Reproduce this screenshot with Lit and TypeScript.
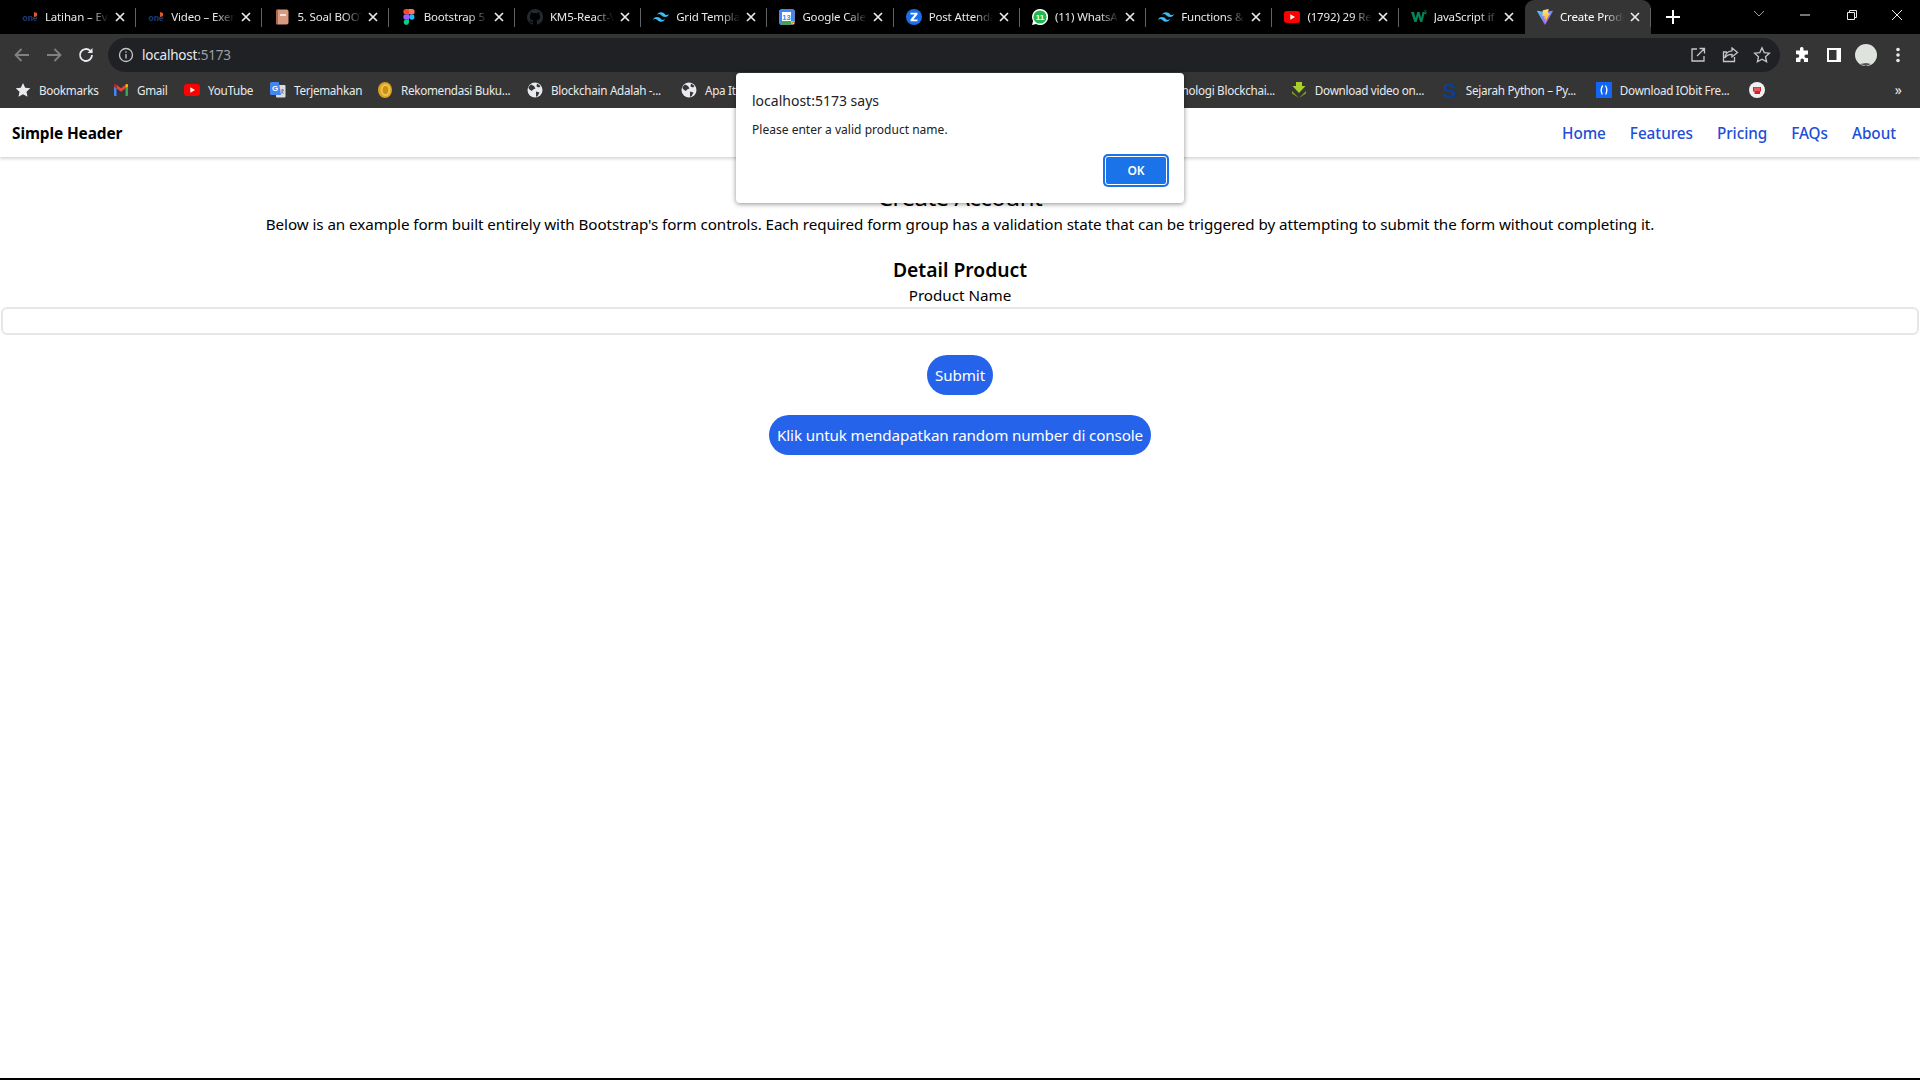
import { LitElement, html, css, svg } from "lit";
import { customElement } from "lit/decorators.js";

const ICONS: Record<string, any> = {
  one: svg`<text x="8" y="11.5" text-anchor="middle" font-family="Liberation Sans" font-size="8.5" font-weight="700" fill="#1f3f77">one</text><path d="M12 3l3 1v3l-3 1z" fill="#e2562c"/>`,
  book: svg`<rect x="2" y="0.5" width="12.5" height="15" rx="2" fill="#d89a80"/><rect x="2" y="0.5" width="2" height="15" rx="1" fill="#a9664e"/><rect x="6" y="5" width="6" height="2" fill="#f6e3da"/>`,
  figma: svg`<path d="M5 0h3v5.300H5a2.650 2.650 0 010-5.300z" fill="#f24e1e"/><path d="M8 0h3a2.650 2.650 0 010 5.300H8z" fill="#ff7262"/><path d="M5 5.300h3v5.300H5a2.650 2.650 0 010-5.300z" fill="#a259ff"/><circle cx="10.800" cy="8" r="2.650" fill="#1abcfe"/><path d="M5 10.600h3v2.700a2.650 2.650 0 11-3-2.700z" fill="#0acf83"/>`,
  github: svg`<path fill="#24292e" d="M8 0a8 8 0 00-2.530 15.590c.4.070.550-.170.550-.380v-1.340c-2.230.480-2.700-1.070-2.700-1.070-.360-.930-.890-1.170-.890-1.170-.730-.500.050-.490.050-.490.800.060 1.230.830 1.230.830.710 1.220 1.870.870 2.330.660.070-.520.280-.870.510-1.070-1.780-.200-3.640-.890-3.640-3.950 0-.870.310-1.590.820-2.150-.080-.200-.360-1.020.080-2.120 0 0 .670-.210 2.200.820a7.600 7.600 0 014 0c1.530-1.040 2.200-.820 2.200-.820.440 1.100.160 1.920.080 2.120.510.560.820 1.270.820 2.150 0 3.070-1.870 3.750-3.650 3.950.290.250.540.730.540 1.480v2.200c0 .210.150.460.550.380A8 8 0 008 0z"/>`,
  tw: svg`<path fill="#38bdf8" d="M8 3.200c-2.100 0-3.500 1.100-4 3.200.8-1.100 1.700-1.500 2.800-1.200.6.200 1 .6 1.500 1.100.8.800 1.700 1.700 3.700 1.700 2.100 0 3.500-1.100 4-3.200-.8 1.100-1.700 1.500-2.800 1.200-.6-.2-1-.6-1.500-1.100C10.900 4.100 10 3.200 8 3.200zM4 8c-2.100 0-3.500 1.100-4 3.200.8-1.100 1.700-1.500 2.800-1.200.6.200 1 .6 1.500 1.100.8.800 1.700 1.700 3.700 1.700 2.100 0 3.500-1.100 4-3.200-.8 1.100-1.700 1.500-2.800 1.200-.6-.2-1-.6-1.500-1.100C6.900 8.900 6 8 4 8z"/>`,
  gcal: svg`<rect x="0.500" y="0.500" width="15" height="15" rx="1.500" fill="#fff"/><path d="M0.500 3V2a1.500 1.500 0 011.500-1.500h10V3z" fill="#4285f4"/><path d="M12 .5h2a1.500 1.500 0 011.500 1.500v10H12z" fill="#4285f4"/><path d="M12 12h3.500v1.500l-3.500 2z" fill="#ea4335"/><path d="M3 12h9v3.500H3z" fill="#34a853"/><path d="M.5 3H3v12.500H2A1.500 1.500 0 01.5 14z" fill="#4285f4"/><path d="M12 12h3.500l-3.500 3.500z" fill="#fbbc04"/><text x="7.500" y="10.500" text-anchor="middle" font-family="Liberation Sans" font-size="7.500" font-weight="700" fill="#4285f4">13</text>`,
  zoom: svg`<circle cx="8" cy="8" r="8" fill="#1a6fe8"/><path d="M4.500 3.800h7v1.800L7.300 10.400h4.200v1.800h-7v-1.800l4.200-4.800H4.500z" fill="#fff"/>`,
  wa: svg`<path d="M8 0a8 8 0 00-6.900 12L0 16l4.100-1.100A8 8 0 108 0z" fill="#fff"/><circle cx="8" cy="8" r="6.600" fill="#1fb84f"/><text x="8" y="11" text-anchor="middle" font-family="Liberation Sans" font-size="8" font-weight="700" fill="#fff">11</text>`,
  yt: svg`<rect x="0" y="2" width="16" height="12" rx="3" fill="#f00"/><path d="M6.300 5.200v5.600L11 8z" fill="#fff"/>`,
  w3: svg`<path d="M0 3h3l1.500 6L6.300 3h2.200l1.700 6 1.300-6h2.400L11.300 13H9.100L7.400 7 5.600 13H3.300z" fill="#04845b"/><path d="M13 1.500h2.700l-1 1.200c.8.200 1.100.7 1 1.300-.2.900-1.500 1.200-2.700.7l.3-.6c.7.300 1.400.2 1.500-.2.100-.4-.4-.6-1-.5l-.1-.4.800-.9h-1.400z" fill="#04845b"/>`,
  vite: svg`<defs><linearGradient id="vg" x1="0" y1="0" x2="1" y2="1"><stop offset="0" stop-color="#41d1ff"/><stop offset="1" stop-color="#bd34fe"/></linearGradient><linearGradient id="vb" x1="0" y1="0" x2="0" y2="1"><stop offset="0" stop-color="#ffea83"/><stop offset="1" stop-color="#ffa800"/></linearGradient></defs><path d="M15.900 2.300L8.400 15.600c-.2.300-.6.300-.8 0L.1 2.300c-.2-.3.100-.7.400-.6l7.400 1.300h.2l7.300-1.300c.4-.1.600.300.5.600z" fill="url(#vg)"/><path d="M11.500.1L6 1.200c-.1 0-.2.100-.2.200l-.3 5.700c0 .2.100.3.300.2l1.500-.3c.2 0 .3.100.3.300l-.5 2.200c0 .2.100.3.300.3l.9-.3c.2 0 .3.100.3.300l-.7 3.400c0 .2.300.3.400.1l.1-.1 4.400-8.800c.1-.2 0-.3-.2-.3l-1.600.3c-.2 0-.3-.1-.3-.3l1-3.600c.1-.2-.1-.3-.2-.3z" fill="url(#vb)"/>`,
  star: svg`<path d="M8 1l2.200 4.700 5.100.6-3.800 3.500 1 5L8 12.300l-4.500 2.500 1-5L.7 6.300l5.100-.6z" fill="#e8eaed"/>`,
  gmail: svg`<path d="M1 14V4.500L3.500 6.300V14H1.800A.8.8 0 011 13.200z" fill="#4285f4"/><path d="M12.500 14V6.300L15 4.500v8.700a.8.800 0 01-.8.800z" fill="#34a853"/><path d="M3.500 6.300V2.800L8 6.200l4.500-3.400v3.500L8 9.700z" fill="#ea4335"/><path d="M1 4.500V3.300c0-1 1.200-1.600 2-1l.5.500v3.500z" fill="#c5221f"/><path d="M12.500 6.300V2.800l.5-.500c.8-.6 2-.0 2 1v1.200z" fill="#fbbc04"/>`,
  translate: svg`<rect x="6" y="3" width="9.500" height="12.500" rx="1" fill="#d9dce0"/><path d="M10.800 8h3M12.300 7.300v1M13.300 8c-.3 1.700-1.400 3-2.700 3.600M11.300 9.500c.5.900 1.300 1.700 2.300 2.100" stroke="#5f6368" stroke-width=".8" fill="none"/><path d="M1.500 0h7.300l2.200 13H1.500A1.500 1.500 0 010 11.500v-10A1.500 1.500 0 011.500 0z" fill="#4285f4"/><text x="5" y="9" text-anchor="middle" font-family="Liberation Sans" font-size="8" font-weight="700" fill="#fff">G</text>`,
  coin: svg`<ellipse cx="8" cy="8" rx="7" ry="8" fill="#d9a11f"/><ellipse cx="8.500" cy="8" rx="5" ry="6.200" fill="#efc04a"/><ellipse cx="8.500" cy="8" rx="2.800" ry="4" fill="#c98f14"/>`,
  globe: svg`<circle cx="8" cy="8" r="7.500" fill="#e8eaed"/><path d="M4 2.500l3 1.500 1.500 2.500-2 .8L4.700 9 2 7 1.400 5zM9 9.500l3.500 1-2 3.800-1.500.5zM10 1.500l3.500 2.500-1.500 1.500-2.500-1z" fill="#35363a"/>`,
  dl: svg`<path d="M5 0h6v4h3.500L8 11 1.500 4H5z" fill="#a8cf2a"/><path d="M1 9l7 7 7-7v2.500l-7 4.500-7-4.500z" fill="#7fa81c"/>`,
  s: svg`<text x="8" y="15.500" text-anchor="middle" font-family="Liberation Sans" font-size="21" font-weight="700" fill="#0b3d91">S</text>`,
  iobit: svg`<rect width="16" height="16" fill="#1266f1"/><path d="M6.800 3.500C5 6 5 10 6.300 12.500M9.400 3.500C11 6 11 10 9.700 12.500" stroke="#fff" stroke-width="1.300" fill="none"/>`,
  red: svg`<circle cx="8" cy="8" r="8" fill="#f1f1f1"/><path d="M4 5h8v4.500H11V12H5.500V9.500H4z" fill="#d81f26"/><path d="M6 5.500v3.500M8 5.500v3.500M10 5.500v3.500" stroke="#f1f1f1" stroke-width=".6"/>`,
};

const icon = (n: string, cls = "fav") => html`<svg class=${cls} viewBox="0 0 16 16">${ICONS[n]}</svg>`;

const TABS = [
  ["one", "Latihan – Evaluasi"], ["one", "Video – Exercise"], ["book", "5. Soal BOOTCAMP"], ["figma", "Bootstrap 5 UI"],
  ["github", "KM5-React-Vite"], ["tw", "Grid Template"], ["gcal", "Google Calendar"], ["zoom", "Post Attendance"],
  ["wa", "(11) WhatsApp"], ["tw", "Functions & More"], ["yt", "(1792) 29 React"], ["w3", "JavaScript if else"],
  ["vite", "Create Product"],
];

const BM_LEFT: [string, string, number][] = [
  ["star", "Bookmarks", 59], ["gmail", "Gmail", 32], ["yt", "YouTube", 47], ["translate", "Terjemahkan", 68],
  ["coin", "Rekomendasi Buku...", 111], ["globe", "Blockchain Adalah -...", 115], ["globe", "Apa Itu Blockchain", 120],
];
const BM_RIGHT: [string, string, number][] = [
  ["dl", "Download video on...", 111], ["s", "Sejarah Python – Py...", 114], ["iobit", "Download IObit Fre...", 113],
];

@customElement("app-root")
export class AppRoot extends LitElement {
  static styles = css`
    :host { display: block; position: relative; height: 1080px; overflow: hidden; background: #fff; color: #000;
      font-family: "Noto Sans", "Open Sans", sans-serif; }
    .tabs { height: 34px; background: #000; display: flex; padding-left: 9.900px; position: relative; box-sizing: border-box; }
    .tab { width: 126.250px; height: 34px; flex: none; display: flex; align-items: center; position: relative; box-sizing: border-box;
      padding: 0 11px 0 12px; color: #e8eaed; }
    .tab:not(:last-of-type):not(.pre-active)::after { content: ""; position: absolute; right: 0; top: 8px; height: 19px; width: 1px; background: #5f6368; }
    .tab.active { background: #353535; border-radius: 9px 9px 0 0; color: #fff; }
    .fav { width: 16px; height: 16px; flex: none; display: block; }
    .title { flex: 1; min-width: 0; margin: -2px 0 0 7px; font-size: 11.500px; letter-spacing: -0.150px; white-space: nowrap; overflow: hidden;
      -webkit-mask-image: linear-gradient(90deg, #000 70%, transparent 100%); mask-image: linear-gradient(90deg, #000 70%, transparent 100%); }
    .close { width: 10px; height: 10px; flex: none; margin-left: 6px; stroke: #e8eaed; stroke-width: 1.700; fill: none; }
    .plus { width: 14px; height: 14px; stroke: #fff; stroke-width: 2; margin: 10px 0 0 15px; flex: none; }
    .win { margin-left: auto; display: flex; align-items: flex-start; }
    .win svg { display: block; width: 46px; height: 30px; fill: none; stroke: #e8eaed; stroke-width: 1; }
    .toolbar { height: 38px; background: #353535; display: flex; align-items: flex-end; box-sizing: border-box; }
    .nav { width: 108px; height: 34px; display: flex; align-items: center; padding-left: 12px; gap: 12px; box-sizing: border-box; flex: none; }
    .nav svg { width: 20px; height: 20px; fill: none; stroke-width: 1.800; display: block; }
    .omni { width: 1672px; height: 34px; background: #202124; border-radius: 17px; display: flex; align-items: center; flex: none; box-sizing: border-box;
      padding: 0 9px 0 10px; }
    .info { display: block; flex: none; width: 16px; height: 16px; fill: none; stroke: #c4c7ca; stroke-width: 1.300; }
    .url { font-size: 13.500px; letter-spacing: -0.200px; color: #e8eaed; margin-left: 8px; }
    .url span { color: #9aa0a6; }
    .omni .right { margin-left: auto; display: flex; gap: 14px; align-items: center; }
    .omni .right svg { width: 18px; height: 18px; fill: none; stroke: #c4c7ca; stroke-width: 1.300; display: block; }
    .ext { flex: 1; height: 34px; display: flex; align-items: center; padding-left: 14px; }
    .ext svg { display: block; flex: none; }
    .ext .puzzle { width: 16px; height: 16px; fill: #fff; }
    .ext .side { width: 14px; height: 14px; margin-left: 17px; fill: #fff; fill-rule: evenodd; }
    .ext .avatar { width: 22px; height: 22px; margin-left: 14px; }
    .ext .kebab { width: 4px; height: 16px; margin-left: 19px; fill: #e8eaed; }
    .bar { height: 36px; background: #353535; display: flex; align-items: center; justify-content: space-between; box-sizing: border-box; padding: 0 18px 0 0; }
    .group { display: flex; align-items: center; }
    .bm { display: flex; align-items: center; flex: none; }
    .left .bm { margin-left: 15px; }
    .right-g .bm { margin-right: 16px; }
    .bm span { font-size: 11.700px; letter-spacing: -0.300px; color: #e8eaed; margin-left: 8px; white-space: nowrap; }
    .ghost { font-size: 11.700px; letter-spacing: -0.300px; color: #e8eaed; white-space: nowrap; margin-right: 16px; }
    .more { font-size: 14px; color: #e8eaed; margin-left: 130px; line-height: 16px; }
    header { height: 49px; background: #fff; display: flex; align-items: center; justify-content: space-between; padding: 1px 24px 0 12px; box-sizing: border-box;
      box-shadow: 0 2px 3px rgba(0,0,0,.16); position: relative; }
    .brand { font-size: 15.400px; font-weight: 700; letter-spacing: -0.100px; }
    nav { display: flex; gap: 24px; }
    nav a { font-size: 15.300px; font-weight: 500; color: #1d4ed8; text-decoration: none; letter-spacing: -0.050px; }
    main { text-align: center; display: flex; flex-direction: column; align-items: center; }
    h1 { font-size: 24px; font-weight: 400; margin: 24px 0 0; line-height: 31px; letter-spacing: -0.500px; }
    .lead { margin: 0; font-size: 15.200px; line-height: 24px; letter-spacing: -0.070px; }
    h2 { font-size: 19.300px; font-weight: 600; margin: 20px 0 0; line-height: 28px; }
    label { display: block; font-size: 15.200px; line-height: 23px; }
    input { display: block; width: 1918px; height: 28px; box-sizing: border-box; border: 2px solid #e5e7eb; border-radius: 6px; outline: none; background: #fff; }
    button { border: 0; background: #2563eb; color: #fff; border-radius: 20px; height: 40px; padding: 0 8px; font: inherit; font-size: 15.200px; letter-spacing: -0.100px; display: block; }
    .submit { margin-top: 20px; }
    .random { margin-top: 20px; letter-spacing: -0.130px; }
    .dialog { position: absolute; left: 736px; top: 73px; width: 448px; height: 130px; box-sizing: border-box; background: #fff; border-radius: 4px;
      box-shadow: 0 1px 5px rgba(0,0,0,.45); padding: 18px 16px 0 16px; color: #202124; }
    .d-title { font-size: 14px; line-height: 20px; letter-spacing: 0; }
    .d-msg { font-size: 12px; line-height: 16px; margin-top: 11px; letter-spacing: 0.020px; }
    .ok-wrap { position: absolute; left: 367px; top: 81px; width: 66px; height: 33px; box-sizing: border-box; background: #1a73e8; border-radius: 5px; padding: 2px; }
    .ok { width: 62px; height: 29px; box-sizing: border-box; background: #1a73e8; color: #fff; border: 1px solid #fff; border-radius: 3px; padding: 0; font-size: 12px; font-weight: 600; letter-spacing: 0; }
    .botline { position: absolute; left: 0; right: 0; bottom: 0; height: 2px; background: #000; }
  `;

  render() {
    return html`
      <div class="tabs">
        ${TABS.map(([ic, t], i) => html`<div class="tab ${i === 12 ? "active" : ""} ${i === 11 ? "pre-active" : ""}">
          ${icon(ic)}<div class="title">${t}</div>
          <svg class="close" viewBox="0 0 10 10"><path d="M1 1l8 8M9 1l-8 8"/></svg>
        </div>`)}
        <svg class="plus" viewBox="0 0 14 14"><path d="M7 0v14M0 7h14"/></svg>
        <div class="win">
          <svg viewBox="0 0 46 30"><path d="M18 11l5 5 5-5" stroke="#9aa0a6"/></svg>
          <svg viewBox="0 0 46 30"><path d="M18 15h10"/></svg>
          <svg viewBox="0 0 46 30"><path d="M19.500 12.500h7v7h-7zM21.500 12.500v-2h7v7h-2"/></svg>
          <svg viewBox="0 0 46 30"><path d="M18 10l10 10M28 10l-10 10"/></svg>
        </div>
      </div>
      <div class="toolbar">
        <div class="nav">
          <svg viewBox="0 0 20 20" stroke="#7f8184"><path d="M17 10H4M9.500 4L3.500 10l6 6"/></svg>
          <svg viewBox="0 0 20 20" stroke="#7f8184"><path d="M3 10h13M10.500 4l6 6-6 6"/></svg>
          <svg viewBox="0 0 20 20" stroke="#e8eaed"><path d="M16 10a6 6 0 11-1.800-4.300L16 7.500"/><path d="M16.500 3v5h-5" fill="#e8eaed" stroke="none"/></svg>
        </div>
        <div class="omni">
          <svg class="info" viewBox="0 0 16 16"><circle cx="8" cy="8" r="6.500"/><path d="M8 7v4.500M8 4.300v1.400"/></svg>
          <div class="url">localhost<span>:5173</span></div>
          <div class="right">
            <svg viewBox="0 0 18 18"><path d="M8 3H3v12h12v-5M15.500 2.500L8 10M10.500 2.500h5v5"/></svg>
            <svg viewBox="0 0 18 18"><path d="M11 2l5.500 4.500L11 11V8.300C7 8.300 5 9.800 3.800 12 4 8.500 6.500 5 11 4.800zM13.500 11v4.500H2.500V6H6"/></svg>
            <svg viewBox="0 0 18 18"><path d="M9 1.800l2.200 4.800 5.200.6-3.900 3.500 1.100 5.100L9 13.200l-4.600 2.600 1.100-5.100-3.900-3.500 5.200-.6z"/></svg>
          </div>
        </div>
        <div class="ext">
          <svg class="puzzle" viewBox="0 0 16 16"><path d="M6 1.500a1.800 1.800 0 013.500 0V3.500H14v4h-1.800a1.800 1.800 0 000 3.600H14V15H10v-1.600a1.800 1.800 0 00-3.600 0V15H2v-4.200h1.500a1.800 1.800 0 000-3.600H2V3.500h4z"/></svg>
          <svg class="side" viewBox="0 0 14 14"><path d="M0 0h14v14H0zM2 2v10h7.500V2z"/></svg>
          <svg class="avatar" viewBox="0 0 22 22"><circle cx="11" cy="11" r="11" fill="#dfe3dd"/><path d="M5 20l6 2 5-2-5-1z" fill="#55534f"/></svg>
          <svg class="kebab" viewBox="0 0 4 16"><circle cx="2" cy="2.500" r="1.800"/><circle cx="2" cy="8" r="1.800"/><circle cx="2" cy="13.500" r="1.800"/></svg>
        </div>
      </div>
      <div class="bar">
        <div class="group left">
          ${BM_LEFT.map(([ic, t, w]) => html`<div class="bm">${icon(ic)}<span style="width:${w}px">${t}</span></div>`)}
        </div>
        <div class="group right-g">
          <div class="ghost">Teknologi Blockchai...</div>
          ${BM_RIGHT.map(([ic, t, w]) => html`<div class="bm">${icon(ic)}<span style="width:${w}px">${t}</span></div>`)}
          ${icon("red")}
          <div class="more">»</div>
        </div>
      </div>
      <header>
        <div class="brand">Simple Header</div>
        <nav><a>Home</a><a>Features</a><a>Pricing</a><a>FAQs</a><a>About</a></nav>
      </header>
      <main>
        <h1>Create Account</h1>
        <p class="lead">Below is an example form built entirely with Bootstrap's form controls. Each required form group has a validation state that can be triggered by attempting to submit the form without completing it.</p>
        <h2>Detail Product</h2>
        <label>Product Name</label>
        <input type="text" />
        <button class="submit">Submit</button>
        <button class="random">Klik untuk mendapatkan random number di console</button>
      </main>
      <div class="dialog">
        <div class="d-title">localhost:5173 says</div>
        <div class="d-msg">Please enter a valid product name.</div>
        <div class="ok-wrap"><button class="ok">OK</button></div>
      </div>
      <div class="botline"></div>
    `;
  }
}
